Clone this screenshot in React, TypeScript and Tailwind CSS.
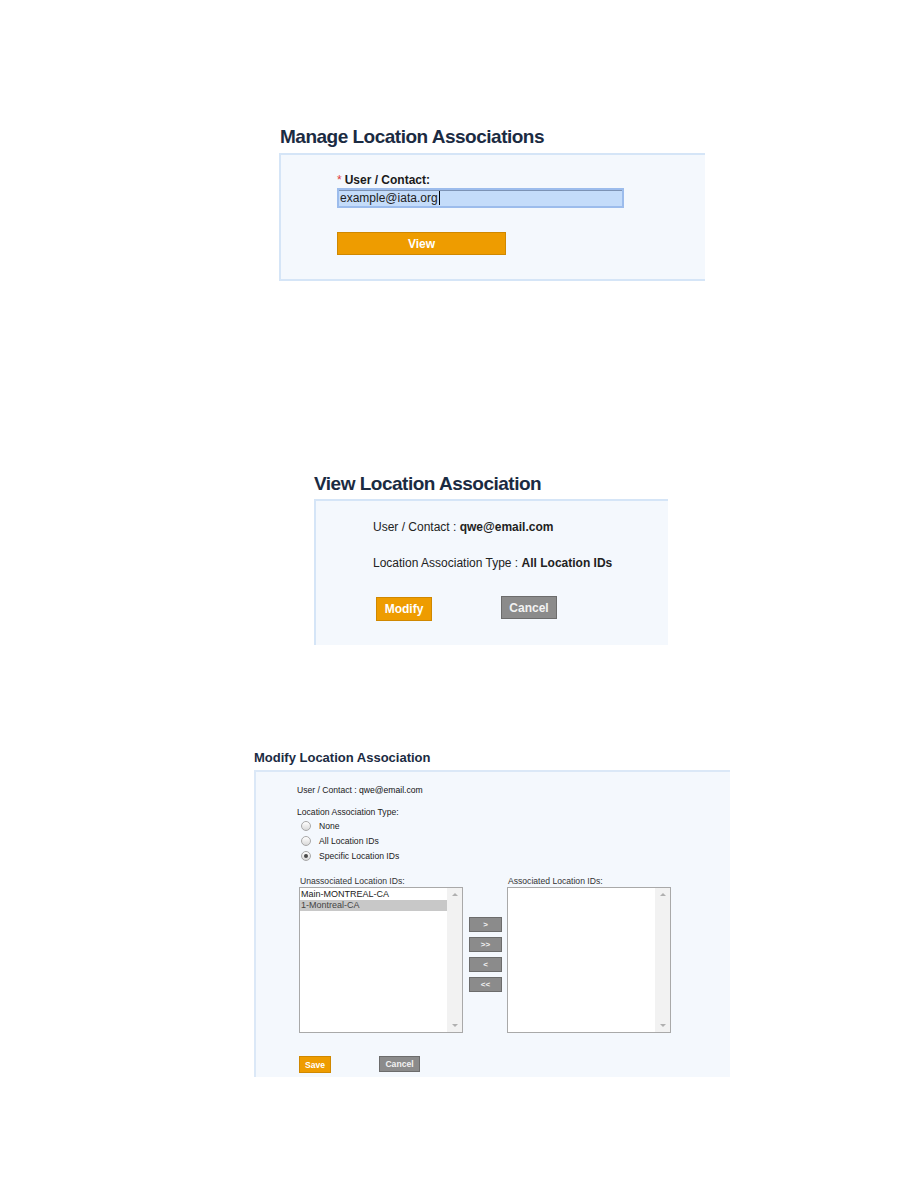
import React from 'react';

const font = { fontFamily: '"Liberation Sans", Arial, sans-serif' };

function OrangeButton({ label, className }: { label: string; className: string }) {
  return (
    <div
      className={`flex items-center justify-center bg-[#ee9c00] border border-[#d08800] text-white font-bold ${className}`}
    >
      {label}
    </div>
  );
}

function GrayButton({ label, className }: { label: string; className: string }) {
  return (
    <div
      className={`flex items-center justify-center bg-[#8b8b8b] border border-[#6c6c6c] text-[#f2f2f2] font-bold ${className}`}
    >
      {label}
    </div>
  );
}

function Radio({ checked, label }: { checked?: boolean; label: string }) {
  return (
    <div className="flex items-center h-[15px]">
      <div className="ml-[4px] w-[10px] h-[10px] rounded-full border border-[#a8a8a8] bg-gradient-to-b from-[#ffffff] to-[#d9d9d9] flex items-center justify-center">
        {checked && <div className="w-[4px] h-[4px] rounded-full bg-[#4a4a4a]" />}
      </div>
      <span className="ml-[8px] text-[#222]">{label}</span>
    </div>
  );
}

function ListBox({ items, selected }: { items: string[]; selected?: number }) {
  return (
    <div className="w-[164px] h-[146px] border border-[#a9a9a9] bg-white flex">
      <div className="flex-1 pt-[1px]">
        {items.map((it, i) => (
          <div
            key={it}
            className={`h-[11px] leading-[11px] pl-[1px] text-[9px] ${
              i === selected ? 'bg-[#c8c8c8] text-[#444]' : 'text-[#222]'
            }`}
          >
            {it}
          </div>
        ))}
      </div>
      <div className="w-[15px] bg-[#f2f2f2] flex flex-col items-center justify-between py-[5px]">
        <div className="w-0 h-0 border-l-[3px] border-r-[3px] border-b-[3px] border-l-transparent border-r-transparent border-b-[#b0b0b0]" />
        <div className="w-0 h-0 border-l-[3px] border-r-[3px] border-t-[3px] border-l-transparent border-r-transparent border-t-[#b0b0b0]" />
      </div>
    </div>
  );
}

export default function App() {
  return (
    <div className="w-[918px] min-h-[1188px] bg-white flex flex-col" style={font}>
      {/* Manage Location Associations */}
      <div className="mt-[125px] ml-[280px] text-[19px] tracking-[-0.5px] leading-[24px] font-bold text-[#1b2b42]">
        Manage Location Associations
      </div>
      <div className="mt-[4px] ml-[279px] w-[426px] h-[128px] border-t-2 border-l-2 border-b-2 border-[#d5e5f7] bg-[#f4f8fd] pt-[18px] pl-[56px] flex flex-col">
        <div className="text-[12px] leading-[14px] font-bold text-[#1a1a1a]">
          <span className="text-[#e03c3c] font-normal mr-[3px]">*</span>User / Contact:
        </div>
        <div className="mt-[1px] w-[287px] h-[20px] border-2 border-[#9cbcec] bg-[#c4dcfa] flex items-center pl-[1px] text-[12px] text-[#222] shadow-[inset_0_1px_0_#7d93b5]">
          example@iata.org
          <span className="w-[1px] h-[14px] bg-black ml-[1px]" />
        </div>
        <OrangeButton label="View" className="mt-[24px] w-[169px] h-[23px] text-[12px]" />
      </div>

      {/* View Location Association */}
      <div className="mt-[191px] ml-[314px] text-[19px] tracking-[-0.5px] leading-[24px] font-bold text-[#1b2b42]">
        View Location Association
      </div>
      <div className="mt-[3px] ml-[314px] w-[354px] h-[146px] border-t-2 border-l-2 border-[#d5e5f7] bg-[#f4f8fd] pt-[18px] pl-[57px] flex flex-col text-[12px] leading-[16px] text-[#222]">
        <div>
          User / Contact : <span className="font-bold">qwe@email.com</span>
        </div>
        <div className="mt-[20px]">
          Location Association Type : <span className="font-bold">All Location IDs</span>
        </div>
        <div className="mt-[25px] flex items-start">
          <OrangeButton label="Modify" className="mt-[1px] ml-[3px] w-[56px] h-[24px] text-[12px]" />
          <GrayButton label="Cancel" className="ml-[69px] w-[56px] h-[23px] text-[12px]" />
        </div>
      </div>

      {/* Modify Location Association */}
      <div className="mt-[105px] ml-[254px] text-[13px] leading-[16px] font-bold text-[#1b2b42]">
        Modify Location Association
      </div>
      <div className="mt-[4px] ml-[254px] w-[476px] h-[307px] border-t-2 border-l-2 border-[#dbe8f7] bg-[#f4f8fd] pt-[12px] pl-[41px] flex flex-col text-[8.6px] leading-[12px] text-[#222]">
        <div>
          User / Contact : <span className="text-[#111]">qwe@email.com</span>
        </div>
        <div className="mt-[10px]">Location Association Type:</div>
        <Radio label="None" />
        <Radio label="All Location IDs" />
        <Radio label="Specific Location IDs" checked />

        <div className="mt-[12px] ml-[2px] flex items-start">
          <div className="flex flex-col">
            <div className="pl-[1px] h-[12px] text-[#333]">Unassociated Location IDs:</div>
            <ListBox items={['Main-MONTREAL-CA', '1-Montreal-CA']} selected={1} />
          </div>
          <div className="ml-[6px] mt-[42px] flex flex-col gap-[5px]">
            {['>', '>>', '<', '<<'].map((b) => (
              <GrayButton key={b} label={b} className="w-[33px] h-[15px] text-[8px]" />
            ))}
          </div>
          <div className="ml-[5px] flex flex-col">
            <div className="pl-[1px] h-[12px] text-[#333]">Associated Location IDs:</div>
            <ListBox items={[]} />
          </div>
        </div>

        <div className="mt-[23px] ml-[2px] flex items-start">
          <OrangeButton label="Save" className="w-[32px] h-[17px] text-[8.6px]" />
          <GrayButton label="Cancel" className="ml-[48px] w-[41px] h-[16px] text-[8.6px]" />
        </div>
      </div>
    </div>
  );
}
